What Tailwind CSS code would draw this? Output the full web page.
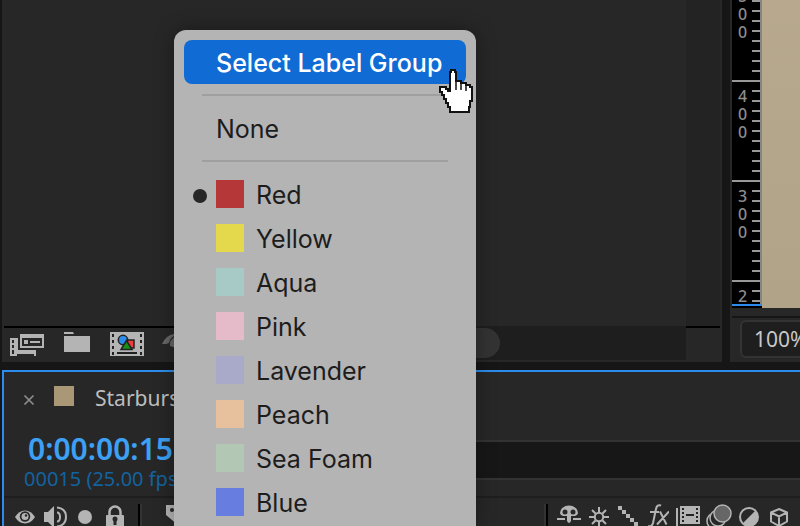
<!DOCTYPE html>
<html lang="en">
<head>
<meta charset="utf-8">
<title>Label menu</title>
<script src="https://cdn.jsdelivr.net/npm/@tailwindcss/browser@4"></script>
</head>
<body class="relative flex h-screen flex-col gap-2 overflow-hidden bg-[#161616] pl-[2px] font-['Noto_Sans',sans-serif] text-[#b4b4b4]">

<div class="flex min-h-0 flex-1 gap-2">
  <!-- Project panel -->
  <section aria-label="Project" class="flex min-w-0 flex-1 flex-col bg-[#272727] px-[2px]">
    <div class="flex min-h-0 flex-1">
      <div class="flex-1"></div>
      <div class="w-[34px] bg-[#232323]"></div>
    </div>
    <div class="flex h-9 shrink-0">
      <div class="flex flex-1 items-start gap-5 border-t-2 border-black pl-[6px] pt-1">
        <button aria-label="Interpret footage"><svg width="34" height="24" viewBox="0 0 34 24" class="block" fill="#b4b4b4" shape-rendering="crispEdges">
          <path d="M0 6h8v12h18v6H0z"/><path d="M2 8h2v3H2zM2 13h2v3H2zM2 18h2v4H2zM7 22h17v2H7z" fill="#272727"/>
          <path d="M10 2h24v14H10z"/><path d="M12 6h20v8H12z" fill="#272727"/><path d="M14 8h4v4h-4zM20 9h10v2H20z"/>
        </svg></button>
        <button aria-label="New folder"><svg width="26" height="24" viewBox="0 0 26 24" class="block" fill="#b4b4b4"><path d="M0 0h9l1 2H0zM0 4h26v16H0z"/></svg></button>
        <button aria-label="New composition"><svg width="34" height="24" viewBox="0 0 34 24" class="block">
          <path d="M0 0h34v24H0z" fill="#b4b4b4"/>
          <path d="M2 2h2v3H2zM2 8h2v3H2zM2 14h2v3H2zM2 20h2v3H2zM30 2h2v3h-2zM30 8h2v3h-2zM30 14h2v3h-2zM30 20h2v3h-2zM7 20h20v2H7z" fill="#202020"/>
          <path d="M17 8h7v8h-7z" fill="#f03c3c" stroke="#222" stroke-width="1.5"/>
          <circle cx="13" cy="8" r="4.7" fill="#2d8ceb" stroke="#222" stroke-width="1.5"/>
          <path d="M16.500 8.500 22 17.500H11z" fill="#169016" stroke="#222" stroke-width="1.5"/>
        </svg></button>
        <button aria-label="Project settings" class="-ml-[2px]"><svg width="24" height="20" viewBox="0 0 24 20" class="block" fill="#666"><path d="M0 12Q4 3 12 2v2Q8 6 7 11l-3 1zM8 14Q7 8 14 4v12z"/></svg></button>
      </div>
      <div class="flex w-[300px] items-start border-b-2 border-[#272727] bg-[#1e1e1e] pt-[2px]">
        <div class="h-[30px] w-[114px] rounded-full bg-[#333]"></div>
      </div>
      <div class="w-[34px] border-t-2 border-black"></div>
    </div>
  </section>

  <!-- Composition viewer -->
  <section aria-label="Composition" class="flex w-[70px] shrink-0 flex-col overflow-hidden bg-[#272727] pl-[2px]">
    <div class="flex min-h-0 flex-1">
      <div class="flex w-[30px] shrink-0 flex-col">
        <div class="min-h-0 flex-1 overflow-hidden border-r-2 border-[#858585] bg-black text-base leading-[18px] font-medium text-[#8c8c8c]">
          <div class="-mt-5 flex h-[100px] justify-between border-t-2 border-[#999]"><div class="flex flex-col pl-[6px] pt-[5px]"><span>5</span><span>0</span><span>0</span></div><div class="w-2 bg-[repeating-linear-gradient(to_bottom,transparent_0px,transparent_8px,#999_8px,#999_10px)]"></div></div>
          <div class="flex h-[100px] justify-between border-t-2 border-[#999]"><div class="flex flex-col pl-[6px] pt-[5px]"><span>4</span><span>0</span><span>0</span></div><div class="w-2 bg-[repeating-linear-gradient(to_bottom,transparent_0px,transparent_8px,#999_8px,#999_10px)]"></div></div>
          <div class="flex h-[100px] justify-between border-t-2 border-[#999]"><div class="flex flex-col pl-[6px] pt-[5px]"><span>3</span><span>0</span><span>0</span></div><div class="w-2 bg-[repeating-linear-gradient(to_bottom,transparent_0px,transparent_8px,#999_8px,#999_10px)]"></div></div>
          <div class="flex h-[100px] justify-between border-t-2 border-[#999]"><div class="flex flex-col pl-[6px] pt-[5px]"><span>2</span></div><div class="w-2 bg-[repeating-linear-gradient(to_bottom,transparent_0px,transparent_8px,#999_8px,#999_10px)]"></div></div>
        </div>
        <div class="h-1 border-t-2 border-[#2d8ceb] bg-black"></div>
      </div>
      <div class="flex-1 bg-linear-to-b from-[#b8a98e] to-[#b0a388]"></div>
    </div>
    <div class="h-[54px] shrink-0 pt-2">
      <div class="border-t-2 border-[#161616] pl-2 pt-[2px]">
        <button class="h-[38px] w-[100px] rounded-md border-2 border-[#333] bg-[#1e1e1e] pl-3 text-left text-[21px] leading-8 text-[#c8c8c8]">100%</button>
      </div>
    </div>
  </section>
</div>

<!-- Timeline -->
<section aria-label="Timeline" class="shrink-0 border-l-2 border-t-2 border-[#2d8ceb] bg-[#272727]">
  <div class="flex h-[52px] items-center pl-[19px]">
    <button aria-label="Close tab" class="mr-[19px]"><svg width="12" height="12" viewBox="0 0 12 12" class="mt-1 block" stroke="#8c8c8c" stroke-width="1.7"><path d="M1.500 1.500l9 9M10.500 1.500l-9 9"/></svg></button>
    <span class="mb-1 h-5 w-5 bg-[#a99776]"></span>
    <h2 class="ml-[21px] text-[21px] leading-8 text-[#bebebe]">Starburst</h2>
  </div>
  <div class="flex h-[74px] border-b-2 border-[#1e1e1e]">
    <div class="w-[296px] pl-5 pt-[7px]">
      <div class="pl-1 text-[30px] font-semibold leading-9 text-[#3ca0f5]">0:00:00:15</div>
      <div class="text-xl leading-6 whitespace-nowrap text-[#12639f]">00015 (25.00 fps)</div>
    </div>
    <div class="mt-4 h-10 flex-1 border-y-2 border-[#333] bg-[#171717]"></div>
  </div>
  <div class="flex h-7 justify-between overflow-hidden">
    <div class="flex items-start pt-[6px]">
      <svg width="20" height="26" viewBox="0 0 20 26" class="ml-[11px]"><path d="M0 13Q4 6.500 10 6.500T20 13Q16 19.500 10 19.500T0 13z" fill="#b4b4b4"/><circle cx="10" cy="12.500" r="5.200" fill="#272727"/><circle cx="10" cy="12.500" r="3.500" fill="#b4b4b4"/><circle cx="11" cy="11.500" r="1.200" fill="#272727"/></svg>
      <svg width="24" height="26" viewBox="0 0 24 26" class="ml-[9px]" fill="none" stroke="#b4b4b4" stroke-width="2"><path d="M0 8h4l6-6v22l-6-6H0z" fill="#b4b4b4" stroke="none"/><path d="M13 8.500q3 0 3 4.500t-3 4.500M13 3.500q9 1 9 9.500t-9 9.500"/></svg>
      <svg width="14" height="26" viewBox="0 0 14 26" class="ml-[10px]"><circle cx="7" cy="13" r="7" fill="#b4b4b4"/></svg>
      <svg width="18" height="26" viewBox="0 0 18 26" class="ml-[14px]"><path d="M3.500 12V8a5.500 5.500 0 0 1 11 0v4" fill="none" stroke="#b4b4b4" stroke-width="2.500"/><rect y="11" width="18" height="14" rx="1" fill="#b4b4b4"/><circle cx="9" cy="15" r="2.500" fill="#272727"/><path d="M7.500 15h3v6h-3z" fill="#272727"/></svg>
      <div class="ml-[14px] h-6 w-1 border-l-2 border-black bg-[#333]"></div>
      <svg width="20" height="26" viewBox="0 0 20 26" class="ml-6"><path d="M0 1h14l6 8-8 12L0 11z" fill="#b4b4b4"/><circle cx="6" cy="6" r="2" fill="#272727"/></svg>
    </div>
    <div class="flex shrink-0 items-start pr-3 pt-[6px]">
      <div class="h-6 w-1 border-l-2 border-[#333] bg-black"></div>
      <svg width="24" height="26" viewBox="0 0 24 26" class="ml-[9px]" fill="#b4b4b4"><path d="M3 9a9 7.500 0 0 1 18 0q0 2-3 3h-4v5q-2 4-4 0v-5H6Q3 11 3 9zM0 14h8v2H0zM16 14h8v2h-8z"/><circle cx="8" cy="8" r="2.500" fill="#272727"/><circle cx="16" cy="8" r="2.500" fill="#272727"/></svg>
      <svg width="20" height="26" viewBox="0 0 20 26" class="ml-2" fill="none" stroke="#b4b4b4" stroke-width="2"><circle cx="10" cy="13" r="4.200"/><path d="M10 3v5M10 18v5M0 13h5M15 13h5M3 6l3.500 3.500M13.500 16.500l3.500 3.500M17 6l-3.500 3.500M6.500 16.500L3 20"/></svg>
      <svg width="20" height="26" viewBox="0 0 20 26" class="ml-[9px]" fill="#b4b4b4" shape-rendering="crispEdges"><path d="M0 2h4v4H0zM4 6h4v4H4zM8 10h4v4H8zM12 14h4v4h-4zM16 18h4v4h-4z"/></svg>
      <svg width="21" height="26" viewBox="0 0 21 26" class="ml-[10px]" fill="none" stroke="#b4b4b4" stroke-width="2"><path d="M13 1.500Q9 0 8 5L5 19q-1 4-5 3M2 8h9M12 7.500l6.500 13M21 7.500L9 20.500"/></svg>
      <svg width="24" height="26" viewBox="0 0 24 26" class="ml-[7px]"><path d="M0 4h2v20H0zM4 2h20v18H4z" fill="#b4b4b4"/><path d="M6 4h2v2H6zM6 8h2v2H6zM6 12h2v2H6zM6 16h2v2H6zM20 4h2v2h-2zM20 8h2v2h-2zM20 12h2v2h-2zM20 16h2v2h-2zM10 10h8v2h-8z" fill="#222"/></svg>
      <svg width="26" height="26" viewBox="0 0 26 26" class="ml-[6px]" stroke="#b4b4b4" stroke-width="1.500" fill="#272727"><circle cx="9" cy="17" r="8"/><circle cx="12" cy="14" r="8"/><circle cx="16.500" cy="9.500" r="8.500" fill="#666"/></svg>
      <svg width="20" height="26" viewBox="0 0 20 26" class="ml-[7px]"><circle cx="10" cy="13" r="9" fill="none" stroke="#b4b4b4" stroke-width="2"/><path d="M16.500 6.500a9 9 0 0 1-13 13z" fill="#b4b4b4"/></svg>
      <svg width="18" height="26" viewBox="0 0 18 26" class="ml-[11px]" fill="none" stroke="#b4b4b4" stroke-width="2"><path d="M9 5l8 3.500v9L9 22l-8-4.500v-9zM1 8.500l8 4 8-4M9 12.500V22"/></svg>
    </div>
  </div>
</section>

<!-- Label colour menu -->
<div role="menu" aria-label="Label" class="absolute bottom-0 left-[174px] top-[30px] w-[302px] overflow-hidden rounded-t-xl bg-[#b4b4b4] px-[10px] pt-[10px] font-[Inter,sans-serif] text-[25px] leading-[46px] text-[#1d1d1d] shadow-[0_0_20px_rgba(0,0,0,0.35)]">
  <button role="menuitem" class="flex h-11 w-full items-start whitespace-nowrap rounded-lg bg-[#106cd4] pl-8 font-medium text-white">Select Label Group</button>
  <hr class="mx-[18px] my-[10px] border-t-2 border-[#9f9f9f]">
  <button role="menuitem" class="flex h-11 w-full items-start pl-8">None</button>
  <hr class="mx-[18px] my-[10px] border-t-2 border-[#9f9f9f]">
  <button role="menuitemradio" aria-checked="true" class="flex h-11 w-full items-start pl-[9px]"><i class="mt-[17px] h-[14px] w-[14px] rounded-full bg-[#262626]"></i><i class="ml-[9px] mr-3 mt-2 h-7 w-7 bg-[#b63738]"></i>Red</button>
  <button role="menuitemradio" aria-checked="false" class="flex h-11 w-full items-start pl-8"><i class="mr-3 mt-2 h-7 w-7 bg-[#e4d94c]"></i>Yellow</button>
  <button role="menuitemradio" aria-checked="false" class="flex h-11 w-full items-start pl-8"><i class="mr-3 mt-2 h-7 w-7 bg-[#a8cac7]"></i>Aqua</button>
  <button role="menuitemradio" aria-checked="false" class="flex h-11 w-full items-start pl-8"><i class="mr-3 mt-2 h-7 w-7 bg-[#e5bac9]"></i>Pink</button>
  <button role="menuitemradio" aria-checked="false" class="flex h-11 w-full items-start pl-8"><i class="mr-3 mt-2 h-7 w-7 bg-[#a9a9ca]"></i>Lavender</button>
  <button role="menuitemradio" aria-checked="false" class="flex h-11 w-full items-start pl-8"><i class="mr-3 mt-2 h-7 w-7 bg-[#e7c19e]"></i>Peach</button>
  <button role="menuitemradio" aria-checked="false" class="flex h-11 w-full items-start pl-8"><i class="mr-3 mt-2 h-7 w-7 bg-[#b3c8b4]"></i>Sea Foam</button>
  <button role="menuitemradio" aria-checked="false" class="flex h-11 w-full items-start pl-8"><i class="mr-3 mt-2 h-7 w-7 bg-[#677de0]"></i>Blue</button>
</div>

<!-- Pointer -->
<svg class="absolute left-[439px] top-[69px]" width="35" height="45" viewBox="0 0 35 45" fill="#fff" stroke="#111" stroke-width="2"><path d="M11 22V3h1V1h4v2h1v9h5v2h5v2h4v2h2v14h-2v6h-1v5H11v-5H9v-4H7v-4H5v-4H3v-3H1v-5h6v2h2v2z"/><path d="M17 11v10M22 13v8M27 15v7" stroke-width="1.5"/></svg>
</body>
</html>
